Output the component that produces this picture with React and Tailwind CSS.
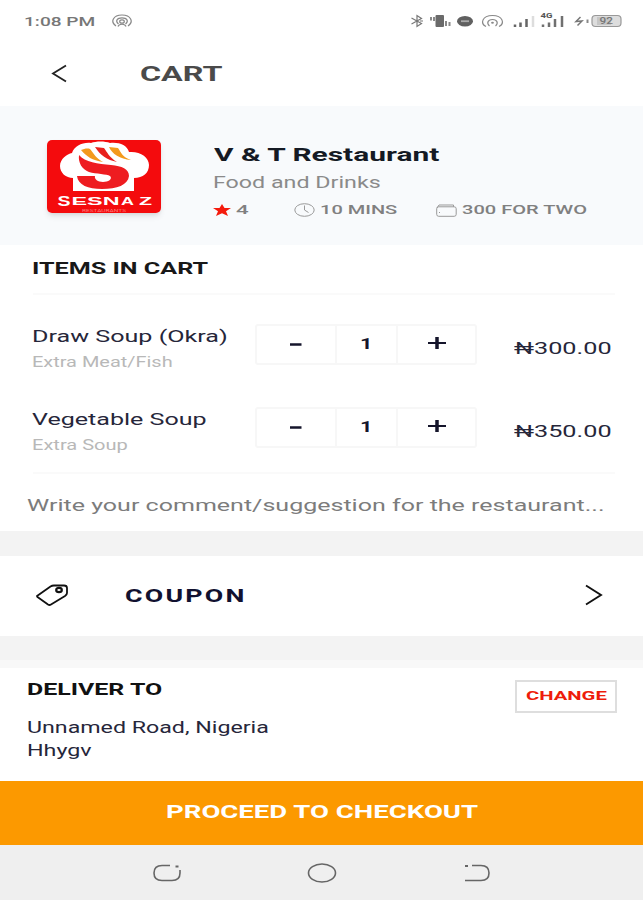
import { useLayoutEffect, useRef, useState } from 'react';

const cartItems = [
  { id: 1, name: 'Draw Soup (Okra)', nameWidth: 'w-[195px]', extra: 'Extra Meat/Fish', extraWidth: 'w-[141px]', qty: 1, price: '₦300.00' },
  { id: 2, name: 'Vegetable Soup', nameWidth: 'w-[174px]', extra: 'Extra Soup', extraWidth: 'w-[96px]', qty: 1, price: '₦350.00' },
];

// Extended lettering: stretches the text so that it fills the width of its box
const Wide = ({ className = '', children }) => {
  const box = useRef(null);
  const label = useRef(null);
  const [scale, setScale] = useState(1);

  useLayoutEffect(() => {
    setScale(box.current.clientWidth / label.current.offsetWidth);
  }, [children]);

  return (
    <span ref={box} className={`block shrink-0 whitespace-nowrap text-left ${className}`}>
      <span ref={label} className="inline-block origin-left" style={{ transform: `scaleX(${scale})` }}>
        {children}
      </span>
    </span>
  );
};

const StatusIcons = () => (
  <svg width="216" height="24" viewBox="408 9 216 24" fill="none" stroke="#777" strokeWidth="1.2">
    {/* bluetooth */}
    <path d="M411.500 18l10 5.500-4.500 3v-11l4.500 3-10 5.500M420 21h3" />
    {/* vibrate */}
    <path d="M431 17v3.500M434 17v4M446 21v5M449.500 22v4" stroke="#888" strokeWidth="2" />
    <rect x="435.500" y="15" width="8.500" height="12" rx="1" fill="#6a6a6a" stroke="none" />
    {/* do not disturb */}
    <ellipse cx="465" cy="21.200" rx="8" ry="5.300" fill="#606060" stroke="none" />
    <path d="M461 21.200h8" stroke="#aaa" strokeWidth="1.800" />
    {/* hotspot */}
    <path d="M486 26.500c-6-3-4-11 6.500-11s12.500 8 6.500 11" stroke="#888" />
    <path d="M489.500 26c-3-2.500-2-6.500 3-6.500s6 4 3 6.500" stroke="#888" />
    <ellipse cx="492.500" cy="22.800" rx="1.400" ry="1" fill="#888" stroke="none" />
    {/* signal */}
    <path d="M515 27v-2.500M520.500 27v-4.500M526.500 27v-8" stroke="#666" strokeWidth="2.500" />
    <path d="M533 27V16" stroke="#ddd" strokeWidth="2.500" />
    <path d="M543 27v-2.500M549 27v-4.500M555 27v-8M562 27V16" stroke="#707070" strokeWidth="2.500" />
    <text x="540.500" y="18" fontSize="7" fontWeight="700" fill="#555" stroke="none" textLength="12" lengthAdjust="spacingAndGlyphs">4G</text>
    {/* battery */}
    <path d="M580.500 17l-4.500 4.500 6-.5-4.500 4.500" strokeWidth="1.500" />
    <path d="M587.500 19.500v3.500" stroke="#888" strokeWidth="2" />
    <rect x="592" y="15.500" width="29" height="11" rx="3.500" fill="#ddd" stroke="#999" />
    <path d="M597 17h14v8h-14z" fill="#c6c6c6" stroke="none" />
    <text x="599.500" y="24.300" fontSize="9" fontWeight="500" fill="#777" stroke="none" textLength="13.500" lengthAdjust="spacingAndGlyphs">92</text>
  </svg>
);

const Logo = () => (
  <svg width="114" height="73" viewBox="0 0 114 73" className="shrink-0 rounded-[5px] shadow-md">
    <rect width="114" height="73" fill="#f40b0d" />
    <path
      d="M26 51V38C19 38 13 33 13 26C13 19 20 14 25 13C27 6 36 2 44 3C49 1 58 1 63 3C72 2 80 5 82 12C93 11 102 17 102 25C102 33 96 38 87 38V51Z"
      fill="#fff"
    />
    <path d="M32 15C31 23 35 29 42 32C49 34 60 34 63 36C66 39 61 42 56 42C51 42 47 39 48 36H30C31 45 41 49 55 49C70 49 81 45 82 36C82 29 75 26 64 25C51 24 38 22 32 15Z" fill="#ee1c20" />
    <path d="M34 10C40 17 45 20 56 22C49 18 47 14 43 9C40 8 37 9 34 10Z" fill="#f39a1d" />
    <path d="M48 7C53 15 60 20 70 22C62 17 60 12 57 8Z" fill="#e8201c" />
    <path d="M62 7C65 14 73 19 84 20C75 17 74 12 71 8Z" fill="#f39a1d" />
    <g fill="#fff" fontFamily="'Liberation Sans', sans-serif" fontWeight="700">
      <text x="10.500" y="65.500" fontSize="14" textLength="13" lengthAdjust="spacingAndGlyphs">S</text>
      <text x="24.500" y="65" fontSize="10" textLength="48" lengthAdjust="spacingAndGlyphs">ESN</text>
      <text x="74" y="65" fontSize="10" textLength="13" lengthAdjust="spacingAndGlyphs">A</text>
      <text x="92" y="65" fontSize="10" textLength="13" lengthAdjust="spacingAndGlyphs">Z</text>
    </g>
    <text x="35" y="71.500" fontSize="4" fill="#ff8080" textLength="44" lengthAdjust="spacingAndGlyphs">RESTAURANTS</text>
  </svg>
);

const QtyStepper = ({ qty }) => (
  <div className="flex h-[41px] w-[222px] shrink-0 rounded-[3px] border-2 border-[#f7f7f7] text-[#15152b]">
    <button className="flex w-[80px] items-center justify-center border-r-2 border-[#f7f7f7]">
      <svg width="12" height="4" viewBox="0 0 12 4"><path d="M0 1.500h11.500" stroke="currentColor" strokeWidth="2.500" /></svg>
    </button>
    <span className="flex w-[61px] items-center justify-center border-r-2 border-[#f7f7f7] text-[15px] font-bold">
      <Wide className="w-[13px]">{qty}</Wide>
    </span>
    <button className="flex flex-1 items-start justify-center pt-[11px]">
      <svg width="18" height="12" viewBox="0 0 18 12" fill="none" stroke="currentColor">
        <path d="M0 6h18" strokeWidth="2" />
        <path d="M9 0v12" strokeWidth="3.500" />
      </svg>
    </button>
  </div>
);

const App = () => (
  <div className="flex h-[900px] w-[643px] flex-col overflow-hidden bg-white font-['Roboto',sans-serif] text-[#26263a]">
    <div className="flex h-[42px] shrink-0 items-center pl-[24px]">
      <Wide className="w-[72px] pt-px text-[13px] font-medium leading-none text-[#777]">1:08 PM</Wide>
      <svg width="20" height="14" viewBox="0 0 20 14" className="ml-4" fill="none" stroke="#888" strokeWidth="1.2">
        <path d="M4 12C-2 8 1 1 10 1s12 7 6 11" />
        <path d="M6.500 10C3 7 5 3.800 10 3.800S17 7 13.500 10" />
        <ellipse cx="10" cy="7.500" rx="2.300" ry="1.700" />
        <path d="M6 12.500c1-3 7-3 8 0" />
      </svg>
      <div className="ml-auto mr-[19px]">
        <StatusIcons />
      </div>
    </div>

    <header className="flex h-16 shrink-0 items-center pl-[51px]">
      <svg width="16" height="20" viewBox="0 0 16 20" fill="none" stroke="#222" strokeWidth="1.8">
        <path d="M15 1.500L2 9.500l13 8" />
      </svg>
      <Wide className="ml-[73px] w-[83px] pt-[2px] text-[21px] font-bold text-[#4a4a4a]">CART</Wide>
    </header>

    <section className="flex h-[139px] shrink-0 bg-[#f8fafc] pl-[47px] pt-[34px]">
      <Logo />
      <div className="ml-[52px] pt-[2px]">
        <Wide className="ml-px w-[225px] text-[19px] font-bold leading-[25px] text-[#151a24]">V &amp; T Restaurant</Wide>
        <Wide className="w-[167px] text-[16px] leading-[32px] text-[#8a8a8a]">Food and Drinks</Wide>
        <div className="flex h-[22px] items-center text-[13px] font-medium text-[#808080]">
          <svg width="18" height="12" viewBox="0 0 18 12">
            <path d="M9 0l2.500 4H18l-5 3.300L15 12 9 9.300 3 12l2-4.700L0 4h6.500z" fill="#f41a0c" />
          </svg>
          <Wide className="ml-[5px] w-[12px]">4</Wide>
          <svg width="21" height="14" viewBox="0 0 21 14" className="ml-[46px]" fill="none" stroke="#999">
            <ellipse cx="10.500" cy="7" rx="9.700" ry="6.300" />
            <path d="M10.500 2.500V7l4 2.500" />
          </svg>
          <Wide className="ml-[5px] w-[77px]">10 MINS</Wide>
          <svg width="21" height="13" viewBox="0 0 21 13" className="ml-[39px]" fill="none" stroke="#999">
            <rect x=".7" y="2.800" width="19.500" height="9.500" rx="2" />
            <path d="M1 4l2-3h14.500v1.800M3.500 8v1" />
          </svg>
          <Wide className="ml-[5px] w-[125px]">300 FOR TWO</Wide>
        </div>
      </div>
    </section>

    <section className="h-[286px] shrink-0 pt-3">
      <Wide className="ml-8 w-[176px] text-[17px] font-bold leading-[22px] text-[#181818]">ITEMS IN CART</Wide>
      <div className="ml-[33px] mr-7 mt-[14px] border-b-2 border-[#fafafa]" />
      <div className="mt-[29px] flex flex-col gap-[42px]">
        {cartItems.map((item) => (
          <div key={item.id} className="flex h-[41px] pl-8">
            <div className="w-[223px] shrink-0">
              <Wide className={`${item.nameWidth} text-[17px] leading-[25px]`}>{item.name}</Wide>
              <Wide className={`${item.extraWidth} text-[14px] leading-[26px] text-[#b8b8b8]`}>{item.extra}</Wide>
            </div>
            <QtyStepper qty={item.qty} />
            <Wide className="ml-[37px] w-[98px] pt-[4px] text-[17px] leading-[41px]">{item.price}</Wide>
          </div>
        ))}
      </div>
      <div className="ml-[33px] mr-7 mt-[24px] border-b-2 border-[#fafafa]" />
      <Wide className="ml-[27px] mt-[19px] w-[577px] text-[17px] leading-[24px] text-[#7c7c7c]">
        Write your comment/suggestion for the restaurant...
      </Wide>
    </section>

    <div className="h-[25px] shrink-0 bg-[#f3f3f3]" />

    <section className="flex h-20 shrink-0 items-center pb-[2px] pl-[36px] pr-[40px] text-[#111130]">
      <svg width="32" height="22" viewBox="0 0 32 22" fill="none" stroke="#111" strokeWidth="1.800">
        <path d="M1 12L14.500 2.500q1.500-1 3.500-1H28q3 0 3 2.500v5q0 1.500-2 3L15 20.500q-1.500 1-3 0L1.500 13z" strokeLinejoin="round" />
        <ellipse cx="23" cy="6" rx="2.800" ry="2.200" strokeWidth="2.200" />
      </svg>
      <Wide className="ml-[57px] w-[122px] text-[18px] font-bold tracking-[1.5px]">COUPON</Wide>
      <svg width="18" height="22" viewBox="0 0 18 22" className="ml-auto" fill="none" stroke="#111" strokeWidth="1.900">
        <path d="M1 1.500L16 11 1 20.500" />
      </svg>
    </section>

    <div className="h-6 shrink-0 bg-[#f3f3f3]" />
    <div className="h-2 shrink-0 bg-[#f8f8f8]" />

    <section className="flex h-[113px] shrink-0 items-start justify-between pl-[27px] pr-[26px]">
      <div className="pt-[10px]">
        <Wide className="w-[135px] text-[17px] font-bold leading-[22px] text-[#111]">DELIVER TO</Wide>
        <Wide className="mt-[16px] w-[242px] text-[16px] leading-[23px]">Unnamed Road, Nigeria</Wide>
        <Wide className="w-[64px] text-[16px] leading-[23px]">Hhygv</Wide>
      </div>
      <button className="mt-3 flex h-[33px] w-[102px] items-center justify-center border-2 border-[#dedede] pb-[2px] text-[13.5px] font-bold text-[#ee1c0a]">
        <Wide className="w-[81px]">CHANGE</Wide>
      </button>
    </section>

    <button className="flex h-16 shrink-0 items-center bg-[#fc9900] pb-[3px] pl-[166px] text-[18px] font-bold text-white">
      <Wide className="w-[312px]">PROCEED TO CHECKOUT</Wide>
    </button>

    <nav className="flex h-[55px] shrink-0 items-center bg-[#efefef] pl-[153px]">
      <svg width="28" height="18" viewBox="0 0 28 18" fill="none" stroke="#666" strokeWidth="1.600">
        <path d="M17 1.500H9Q1 1.500 1 9t8 7.500h10q8 0 8-7.500V6" />
        <path d="M22.500 2.500h3" strokeWidth="2" />
      </svg>
      <svg width="30" height="20" viewBox="0 0 30 20" className="ml-[126px]" fill="none" stroke="#666" strokeWidth="1.600">
        <ellipse cx="15" cy="10" rx="13.500" ry="9" />
      </svg>
      <svg width="25" height="18" viewBox="0 0 25 18" className="ml-[128px]" fill="none" stroke="#666" strokeWidth="1.600">
        <path d="M7 1.500h9q8 0 8 7.500t-8 7.500H0" />
        <path d="M0 2h3" strokeWidth="2" />
      </svg>
    </nav>
  </div>
);

export default App;
